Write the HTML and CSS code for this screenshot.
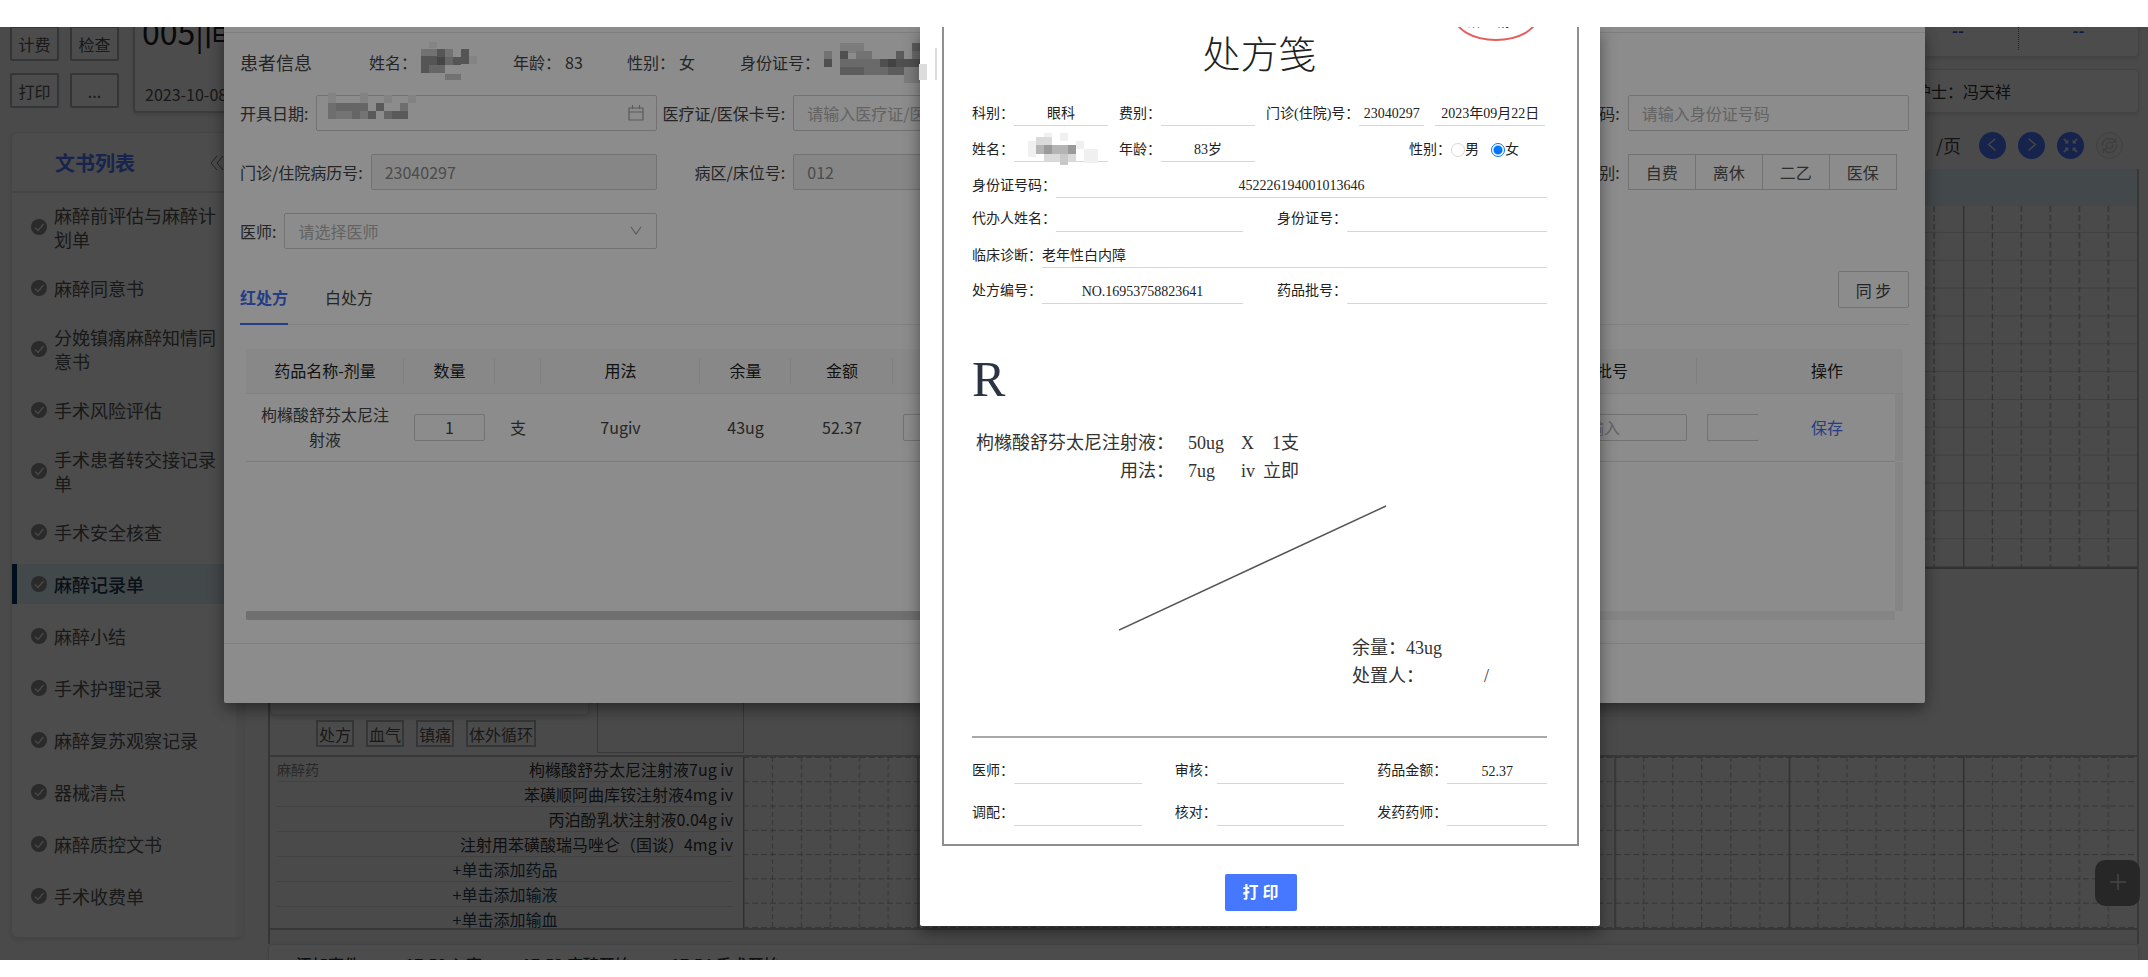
FILE: index.html
```html
<!DOCTYPE html>
<html lang="zh-CN">
<head>
<meta charset="utf-8">
<title>麻醉记录单</title>
<link rel="stylesheet" href="styles.css">
</head>
<body>
<svg class="defs" aria-hidden="true">
  <symbol id="ok" viewBox="0 0 16 16"><circle cx="8" cy="8" r="8" fill="#8c8c8c"/><path d="M4 8.500l3 3 5.500-6.500" fill="none" stroke="#f4f4f4" stroke-width="1.300"/></symbol>
</svg>
<div class="screen">
  <header class="topbar">
    <div class="quick">
      <button>计费</button><button>检查</button><button>打印</button><button>...</button>
    </div>
    <section class="card room"><h1>005|间</h1><p>2023-10-08</p></section>
    <div class="side-cards">
      <section class="card stats"><span class="stat">--</span><span class="stat">--</span></section>
      <section class="card nurse"><span>护士：</span><span>冯天祥</span></section>
    </div>
  </header>
  <div class="content">
    <nav class="sidebar">
      <div class="side-title"><h2>文书列表</h2><svg width="14" height="16" viewBox="0 0 14 16"><path d="M7 1L1 8l6 7M13 1L7 8l6 7" fill="none" stroke="#777"/></svg></div>
      <ul class="docs">
        <li><svg><use href="#ok"/></svg><a>麻醉前评估与麻醉计划单</a></li>
        <li><svg><use href="#ok"/></svg><a>麻醉同意书</a></li>
        <li><svg><use href="#ok"/></svg><a>分娩镇痛麻醉知情同意书</a></li>
        <li><svg><use href="#ok"/></svg><a>手术风险评估</a></li>
        <li><svg><use href="#ok"/></svg><a>手术患者转交接记录单</a></li>
        <li><svg><use href="#ok"/></svg><a>手术安全核查</a></li>
        <li class="active"><svg><use href="#ok"/></svg><a>麻醉记录单</a></li>
        <li><svg><use href="#ok"/></svg><a>麻醉小结</a></li>
        <li><svg><use href="#ok"/></svg><a>手术护理记录</a></li>
        <li><svg><use href="#ok"/></svg><a>麻醉复苏观察记录</a></li>
        <li><svg><use href="#ok"/></svg><a>器械清点</a></li>
        <li><svg><use href="#ok"/></svg><a>麻醉质控文书</a></li>
        <li><svg><use href="#ok"/></svg><a>手术收费单</a></li>
      </ul>
    </nav>
    <main class="main">
      <div class="pager">
        <span>/页</span>
        <button aria-label="上一页"><svg viewBox="0 0 28 28"><path d="M17 7l-7 6 7 6"/></svg></button>
        <button aria-label="下一页"><svg viewBox="0 0 28 28"><path d="M11 7l7 6-7 6"/></svg></button>
        <button aria-label="退出全屏"><svg viewBox="0 0 28 28"><path d="M7 7l4 4M21 7l-4 4M7 21l4-4M21 21l-4-4M11 8.500V11H8.500M17 8.500V11h2.500M11 19.500V17H8.500M17 19.500V17h2.500"/></svg></button>
        <button class="off" aria-label="刷新"><svg viewBox="0 0 28 28"><path d="M6 15a8 8 0 0 1 14-6M22 13a8 8 0 0 1-14 6M21 6v4h-4M7 22v-4h4"/><circle cx="14" cy="14" r="3.500"/></svg></button>
      </div>
      <div class="chart">
        <div class="chart-head"></div>
        <div class="vitals">
          <svg viewBox="0 0 1395 363" preserveAspectRatio="none">
            <defs>
              <pattern id="rows" width="1395" height="28" y="-2" patternUnits="userSpaceOnUse"><path d="M0 .5H1395" stroke="#d4d4d4"/></pattern>
              <pattern id="cols" width="174.400" height="363" patternUnits="userSpaceOnUse"><path d="M.5 0V363" stroke="#a8a8a8" stroke-width="2"/><path d="M29.500 0V363M58.500 0V363M87.500 0V363M116.500 0V363M145.500 0V363" stroke="#8c8c8c" stroke-dasharray="6 3"/></pattern>
            </defs>
            <rect width="1395" height="363" fill="url(#rows)"/><rect width="1395" height="363" fill="url(#cols)"/>
          </svg>
        </div>
        <div class="middle">
          <div class="tools">
            <div class="card tool-card"></div>
            <div class="tool-row"><button>处方</button><button>血气</button><button>镇痛</button><button>体外循环</button></div>
          </div>
          <div class="box"></div>
        </div>
        <div class="drugs">
          <div class="drug-list">
            <div class="drug"><small>麻醉药</small><span>枸橼酸舒芬太尼注射液7ug iv</span></div>
            <div class="drug"><span>苯磺顺阿曲库铵注射液4mg iv</span></div>
            <div class="drug"><span>丙泊酚乳状注射液0.04g iv</span></div>
            <div class="drug"><span>注射用苯磺酸瑞马唑仑（国谈）4mg iv</span></div>
            <div class="drug add"><a>+单击添加药品</a></div>
            <div class="drug add"><a>+单击添加输液</a></div>
            <div class="drug add"><a>+单击添加输血</a></div>
          </div>
          <div class="drug-grid">
            <svg viewBox="0 0 1395 174" preserveAspectRatio="none">
              <defs>
                <pattern id="r2" width="1395" height="24.700" patternUnits="userSpaceOnUse"><path d="M0 .5H1395" stroke="#b0b0b0" stroke-dasharray="6 3"/></pattern>
                <pattern id="c2" width="174.400" height="174" patternUnits="userSpaceOnUse"><path d="M.5 0V174" stroke="#a0a0a0" stroke-width="2"/><path d="M29.500 0V174M58.500 0V174M87.500 0V174M116.500 0V174M145.500 0V174" stroke="#aaa" stroke-dasharray="5 3"/></pattern>
              </defs>
              <rect width="1395" height="174" fill="url(#r2)"/><rect width="1395" height="174" fill="url(#c2)"/>
            </svg>
          </div>
        </div>
        <div class="strip"></div>
      </div>
      <div class="card events"><a>+添加事件</a><span>17:50 入室</span><span>17:53 麻醉开始</span><span>17:54 手术开始</span></div>
    </main>
  </div>
  <button class="fab" aria-label="添加"><svg width="16" height="16" viewBox="0 0 16 16"><path d="M8 0v16M0 8h16" stroke="#e8e8e8" stroke-width="1.500"/></svg></button>

  <div class="mask"></div>
  <section class="dialog rx-dialog">
    <div class="rx-head"></div>
    <div class="rx-body">
      <div class="patient">
        <h3>患者信息</h3>
        <p>姓名：
          <svg class="blot" width="56" height="40" shape-rendering="crispEdges"><path fill="#f0f0f0" d="M8 0h8v6H8zM48 14h8v8h-8z"/><path fill="#cfcfcf" d="M0 7h16v8H0zM24 7h8v8h-8zM24 32h16v6H24z"/><path fill="#9c9c9c" d="M0 14h16v9H0zM16 7h8v8h-8zM40 7h8v15h-8zM32 15h8v8h-8zM0 23h8v8H0z"/><path fill="#808080" d="M16 15h8v8h-8z"/><path fill="#bababa" d="M8 23h16v8H8zM24 15h8v8h-8z"/></svg>
        </p>
        <p class="age">年龄：<span>83</span></p>
        <p class="sex">性别：<span>女</span></p>
        <p class="idno">身份证号：
          <svg class="blot" width="96" height="44" shape-rendering="crispEdges"><path fill="#e2e2e2" d="M16 3h24v10H16zM80 27h16v16H80z"/><path fill="#d2d2d2" d="M0 11h8v8H0zM32 11h16v8H32z"/><path fill="#929292" d="M0 19h8v8H0zM16 11h8v8h-8zM56 19h40v8H56z"/><path fill="#a8a8a8" d="M16 27h24v8H16zM64 27h16v8H64zM72 11h8v8h-8zM88 3h8v8h-8z"/><path fill="#c2c2c2" d="M16 19h40v8H16zM40 27h24v8H40zM88 11h8v8h-8z"/><path fill="#7a7a7a" d="M64 19h8v8h-8z"/></svg>
        </p>
      </div>
      <form class="fields">
        <div class="field c1"><label for="f1">开具日期:</label><span class="ctl"><input id="f1">
          <svg class="blot" width="94" height="34" shape-rendering="crispEdges"><path fill="#eee" d="M0 0h8v10H0zM32 0h8v10h-8zM56 2h8v8h-8zM80 2h8v8h-8z"/><path fill="#c8c8c8" d="M0 10h8v16H0zM48 10h8v8h-8zM72 10h8v8h-8z"/><path fill="#bbb" d="M8 10h32v8H8zM24 18h8v8h-8zM56 18h8v8h-8z"/><path fill="#d4d4d4" d="M8 18h16v8H8zM32 18h8v8h-8z"/><path fill="#a4a4a4" d="M40 18h8v8h-8zM48 10h8v8h-8zM64 18h16v8H64z"/></svg>
          <svg class="suffix" viewBox="0 0 16 16"><path d="M1 3h14v12H1zM1 7h14M4.500 0v4M11.500 0v4"/></svg></span></div>
        <div class="field"><label for="f2">医疗证/医保卡号:</label><input id="f2" placeholder="请输入医疗证/医保卡号"></div>
        <div class="field last"><label for="f3">身份证号码:</label><input id="f3" placeholder="请输入身份证号码"></div>
        <div class="field c1"><label for="f4">门诊/住院病历号:</label><input id="f4" value="23040297" disabled></div>
        <div class="field"><label for="f5">病区/床位号:</label><input id="f5" value="012" disabled></div>
        <div class="field last"><label>费别:</label><div class="seg"><button type="button">自费</button><button type="button">离休</button><button type="button">二乙</button><button type="button">医保</button></div></div>
        <div class="field c1"><label for="f6">医师:</label><span class="ctl"><select id="f6"><option>请选择医师</option></select>
          <svg class="suffix" viewBox="0 0 16 16"><path d="M3 4l5 7 5-7"/></svg></span></div>
      </form>
      <div class="tabs">
        <button class="tab on">红处方</button><button class="tab">白处方</button>
        <button class="sync">同 步</button>
      </div>
      <div class="grid-wrap">
        <table class="grid">
          <colgroup><col class="w158"><col class="w91"><col class="w46"><col class="w159"><col class="w91"><col class="w102"><col><col class="w170"><col class="w62"><col class="w136"><col class="w8"></colgroup>
          <thead><tr><th>药品名称-剂量</th><th>数量</th><th></th><th>用法</th><th>余量</th><th>金额</th><th></th><th>批号</th><th class="nb"></th><th class="nb">操作</th><th class="nb"></th></tr></thead>
          <tbody><tr><td>枸橼酸舒芬太尼注射液</td><td><input value="1" aria-label="数量"></td><td>支</td><td>7ugiv</td><td>43ug</td><td>52.37</td><td><input aria-label="药品"></td><td class="batch"><input placeholder="请输入" aria-label="批号"></td><td class="cut"><input aria-label="备注"></td><td><a class="link">保存</a></td><td class="vbar"></td></tr></tbody>
        </table>
        <div class="void"><div class="vbar"></div></div>
        <div class="hbar"><div class="thumb"></div></div>
      </div>
    </div>
    <div class="rx-foot"></div>
  </section>

  <div class="mask"></div>
  <section class="dialog slip-dialog">
    <svg class="spill" width="20" height="44" shape-rendering="crispEdges"><path fill="#dcdcdc" d="M0 27h8v16H0zM16 11h2v32h-2z"/></svg>
    <div class="slip">
      <div class="stamp">麻、精一</div>
      <h2>处方笺</h2>
      <div class="line r1"><span class="k">科别：</span><span class="v w94">眼科</span><span class="k g11">费别：</span><span class="v w94"></span><span class="k g11">门诊(住院)号：</span><span class="v w65">23040297</span><span class="v w110 g11">2023年09月22日</span></div>
      <div class="line r1"><span class="k">姓名：</span><span class="v w94"><svg width="70" height="32" shape-rendering="crispEdges"><path fill="#f0f0f0" d="M16 0h8v8h-8zM0 8h8v16H0zM32 0h8v8h-8zM56 16h14v14H56zM48 8h8v8h-8z"/><path fill="#b4b4b4" d="M8 12h38v9H8z"/><path fill="#dadada" d="M8 4h16v8H8zM16 21h32v7H16z"/><path fill="#9a9a9a" d="M16 12h8v9h-8zM40 12h8v9h-8z"/><path fill="#c8c8c8" d="M32 21h8v11h-8z"/></svg></span><span class="k g11">年龄：</span><span class="v w94">83岁</span>
        <span class="sexes"><span class="k">性别：</span><label><input type="radio" name="sex">男</label><label><input type="radio" name="sex" checked>女</label></span></div>
      <div class="line r1"><span class="k">身份证号码：</span><span class="v">452226194001013646</span></div>
      <div class="line r2"><div class="half"><span class="k">代办人姓名：</span><span class="v"></span></div><div class="half"><span class="k">身份证号：</span><span class="v"></span></div></div>
      <div class="line r1"><span class="k">临床诊断：</span><span class="v left">老年性白内障</span></div>
      <div class="line r1"><div class="half"><span class="k">处方编号：</span><span class="v">NO.16953758823641</span></div><div class="half"><span class="k">药品批号：</span><span class="v"></span></div></div>
      <div class="rx-mark">R</div>
      <div class="med"><span class="name">枸橼酸舒芬太尼注射液：</span><span class="dose">50ug</span><span class="x">X</span><span class="n">1支</span></div>
      <div class="med"><span class="name">用法：</span><span class="dose">7ug</span><span class="x">iv</span><span>立即</span></div>
      <svg class="slash" viewBox="0 0 268 126"><path d="M0 125L267 1" stroke="#555" stroke-width="1.500"/></svg>
      <div class="rest"><p>余量：43ug</p><p>处置人：<span>/</span></p></div>
      <hr>
      <div class="signs">
        <div><span class="k">医师：</span><span class="v"></span></div><div><span class="k">审核：</span><span class="v"></span></div><div><span class="k">药品金额：</span><span class="v">52.37</span></div>
        <div><span class="k">调配：</span><span class="v"></span></div><div><span class="k">核对：</span><span class="v"></span></div><div><span class="k">发药药师：</span><span class="v"></span></div>
      </div>
    </div>
    <button class="print">打 印</button>
  </section>
</div>
</body>
</html>
```

FILE: styles.css
```css
* { box-sizing: border-box; }
body { margin: 0; padding: 27px 0 17px; background: #fff; font: 16px/24px "Noto Sans CJK SC", sans-serif; color: #444; }
h1, h2, h3, p, ul { margin: 0; padding: 0; font-weight: 400; }
button, input, select { font: inherit; color: inherit; }
.defs { position: absolute; width: 0; height: 0; }
.screen { position: relative; overflow: hidden; height: calc(100vh - 44px); background: #f8f8f8; }
.card { background: #fdfdfd; border: 1px solid #dcdfe2; border-radius: 4px; box-shadow: 0 2px 5px rgba(0, 0, 0, .12); }

.topbar { display: flex; height: 126px; margin-top: -40px; padding: 0 9px 0 10px; }
.quick { display: grid; grid-template-columns: 49px 49px; grid-auto-rows: 35px; gap: 12px 11px; align-content: end; padding-bottom: 5px; margin-right: 14px; }
.quick button { padding: 0; border: 2px solid #aeb2b4; border-radius: 2px; background: #fbfbfb; color: #555; }
.room { flex: 1; display: flex; flex-direction: column; justify-content: flex-end; padding: 0 11px 5px 7px; border-width: 2px; border-color: #c4c7c9; }
.room h1 { font-size: 32px; line-height: 40px; color: #222; }
.room p { margin-top: 31px; padding-left: 3px; color: #555; }
.side-cards { width: 720px; display: flex; flex-direction: column; gap: 12px; margin-left: 12px; }
.stats { height: 70px; display: flex; justify-content: flex-end; padding-bottom: 6px; }
.stat { width: 120px; padding-top: 30px; text-align: center; color: #2f5ae0; font-weight: 700; }
.stat + .stat { border-left: 1px dotted #777; }
.nurse { height: 44px; padding: 9px 127px 0 0; display: flex; justify-content: flex-end; color: #333; }

.content { display: flex; margin-top: 19px; padding: 0 9px 0 11px; align-items: flex-start; }
.sidebar { width: 232px; height: 806px; flex: none; background: #fdfdfd; border: 1px solid #e4e6e8; border-radius: 6px; border-right: 7px solid #f2f2f2; box-shadow: 0 2px 5px rgba(0, 0, 0, .12); }
.side-title { height: 60px; display: flex; align-items: center; justify-content: space-between; padding: 2px 12px 0 43px; border-bottom: 2px solid #e6e8ea; }
.side-title h2 { font-size: 20px; font-weight: 700; color: #4d7aff; }
.docs { list-style: none; padding-top: 5px; display: flex; flex-direction: column; gap: 12px; }
.docs li { display: flex; align-items: center; min-height: 40px; padding: 5px 4px 5px 19px; font-size: 18px; line-height: 24px; color: #555; }
.docs svg { width: 16px; height: 16px; flex: none; margin-right: 7px; }
.docs .active { background: #dfeefa; border-left: 5px solid #00365c; padding-left: 14px; color: #1c3a50; font-weight: 500; }

.main { flex: 1; min-width: 0; margin-left: 25px; }
.pager { display: flex; justify-content: flex-end; align-items: flex-start; gap: 12px; height: 37px; padding-right: 16px; }
.pager span { font-size: 18px; margin-right: 6px; line-height: 27px; }
.pager button { width: 27px; height: 27px; padding: 0; border: 0; border-radius: 50%; background: #4a76ff; }
.pager svg { display: block; width: 27px; height: 27px; fill: none; stroke: #e4e4e4; stroke-width: 1.6; }
.pager .off { background: #f3f3f3; border: 1px solid #d5d5d5; }
.pager .off svg { width: 25px; height: 25px; stroke: #d0d0d0; }
.chart { border-right: 2px solid #bbb; border-left: 2px solid #b4b4b4; }
.chart-head { height: 37px; background: #dfeef8; }
.vitals { height: 363px; padding-left: 473px; border-bottom: 2px solid #aaa; }
.vitals svg, .drug-grid svg { display: block; width: 100%; height: 100%; }
.middle { height: 186px; display: flex; align-items: flex-end; }
.tools { width: 319px; }
.tool-card { height: 60px; margin-bottom: 5px; }
.tool-row { display: flex; gap: 12px; padding-left: 46px; margin-bottom: 8px; white-space: nowrap; }
.tool-row button { height: 27px; flex: none; padding: 0 1px; border: 2px solid #b0b4b6; background: #fafafa; color: #555; line-height: 22px; }
.box { width: 147px; height: 120px; margin: 0 0 2px 8px; border: 1px solid #bcbcbc; }
.drugs { display: flex; height: 175px; border-top: 2px solid #bababa; border-bottom: 2px solid #bababa; }
.drug-list { width: 473px; flex: none; padding: 0 10px 0 7px; display: grid; grid-template-rows: repeat(7, 1fr); }
.drug { display: flex; align-items: center; border-bottom: 1px solid #dadada; color: #333; }
.drug:last-child { border-bottom: 0; }
.drug small { font-size: 14px; color: #888; }
.drug span { margin-left: auto; }
.drug.add { justify-content: center; color: #24435c; }
.drug-grid { flex: 1; min-width: 0; }
.strip { height: 14px; background: #f2f2f2; }
.events { height: 40px; display: flex; align-items: center; padding-left: 18px; font-weight: 500; color: #333; }
.events a { margin-right: 45px; }
.events span { margin-right: 40px; }
.fab { position: absolute; right: 8px; bottom: 54px; width: 45px; height: 46px; padding: 0; border: 0; border-radius: 10px; background: #838383; }

.mask { position: absolute; inset: 0; background: rgba(0, 0, 0, .45); }
.dialog { position: absolute; background: #fff; box-shadow: 0 6px 16px rgba(0, 0, 0, .45); }
.rx-dialog { left: 224px; right: 223px; top: 0; border-radius: 0 0 2px 2px; }
.rx-head { height: 6px; border-bottom: 1px solid #e6e6e6; }
.rx-body { padding: 0 16px; }
.patient { display: flex; align-items: center; height: 62px; padding-bottom: 5px; }
.patient h3 { width: 129px; font-size: 18px; }
.patient p { display: flex; align-items: center; }
.patient p:nth-child(2) { width: 144px; }
.patient .age { width: 114px; }
.patient .sex { width: 113px; }
.patient span { margin-left: 4px; }
.blot { flex: none; }
.patient .blot { margin-left: 4px; }
.fields { display: grid; grid-template-columns: repeat(4, 1fr); gap: 23px 0; }
.field { display: flex; align-items: center; height: 36px; }
.field.last { grid-column: 4; }
.field label { width: 128px; flex: none; margin-right: 8px; text-align: right; white-space: nowrap; }
.field.c1 { grid-column: 1; }
.field.c1 label { width: auto; }
.field input, .field select { flex: 1; min-width: 0; width: 100%; height: 36px; padding: 0 13px; border: 1px solid #cfcfcf; border-radius: 2px; background: #fff; appearance: none; }
.field select, input::placeholder { color: #b5b5b5; }
.field input:disabled { background: #f5f5f5; color: #8a8a8a; }
.ctl { position: relative; flex: 1; display: flex; }
.ctl .blot { position: absolute; left: 12px; top: -2px; }
.suffix { position: absolute; right: 13px; top: 10px; width: 16px; height: 16px; fill: none; stroke: #a6a6a6; stroke-width: 1.2; }
.seg { display: flex; }
.seg button { width: 68px; height: 36px; padding: 0; margin-right: -1px; border: 1px solid #cfcfcf; background: #fff; color: #555; }
.tabs { display: flex; height: 54px; margin-top: 22px; border-bottom: 1px solid #eaeaea; }
.tab { padding: 0; margin-right: 37px; border: 0; border-bottom: 2px solid transparent; background: none; height: 54px; }
.tab.on { color: #4570f5; font-weight: 700; border-color: #4570f5; }
.sync { width: 71px; height: 37px; margin-left: auto; padding: 0; border: 1px solid #cfcfcf; border-radius: 2px; background: #fff; }
.grid-wrap { margin: 24px 6px 0; }
.grid { width: 100%; table-layout: fixed; border-collapse: collapse; text-align: center; line-height: 25px; }
.w158 { width: 158px; } .w91 { width: 91px; } .w46 { width: 46px; } .w159 { width: 159px; } .w102 { width: 102px; }
.w170 { width: 170px; } .w62 { width: 62px; } .w136 { width: 136px; } .w8 { width: 8px; }
.grid th { height: 44px; padding: 0; background: linear-gradient(#e8e8e8, #e8e8e8) right center / 1px 26px no-repeat #f7f7f7; border-bottom: 1px solid #ececec; font-weight: 400; color: #222; }
.grid th.nb { background: #f7f7f7; }
.grid td { height: 68px; padding: 0 10px; border-bottom: 1px solid #e2e2e2; }
.grid td:first-child { padding: 0 14px; }
.grid td:nth-child(3) { padding: 0; }
.grid input { display: block; width: 100%; height: 27px; padding: 0 10px; border: 1px solid #cfcfcf; border-radius: 2px; background: #fff; }
.grid td:nth-child(2) input { text-align: center; }
.grid td.batch { padding-left: 34px; }
.grid td.cut { padding-right: 0; }
.grid td.cut input { border-right: 0; }
.grid .link { color: #4570f5; }
.grid td.vbar { padding: 0; border: 0; background: #f2f2f2; }
.void { height: 149px; display: flex; justify-content: flex-end; }
.void .vbar { width: 8px; background: #f2f2f2; }
.hbar { height: 9px; margin-right: 8px; background: #f2f2f2; }
.thumb { width: 70%; height: 9px; border-radius: 2px; background: #c8cac9; }
.rx-foot { height: 60px; margin-top: 23px; border-top: 1px solid #e8e8e8; }

.slip-dialog { left: 920px; width: 680px; top: 0; padding: 0 21px 15px 22px; border-radius: 0 0 2px 2px; font: 14px/20px "Liberation Serif", "Noto Sans CJK SC", serif; color: #222; }
.spill { position: absolute; left: -1px; top: 10px; }
.slip { position: relative; overflow: hidden; padding: 0 30px 18px 28px; border: 2px solid #8f8f8f; border-top: 0; }
.stamp { position: absolute; right: 38px; top: -38px; width: 86px; height: 52px; border: 2px solid #e0605c; border-radius: 50%; text-align: center; line-height: 62px; }
.slip h2 { padding-top: 6px; font-size: 38px; line-height: 44px; text-align: center; font-weight: 300; }
.line { display: flex; height: 36px; align-items: flex-end; }
.slip h2 + .line { margin-top: 13px; }
.line.r2 { height: 34px; }
.k { flex: none; line-height: 22px; padding-bottom: 1px; white-space: nowrap; }
.v { flex: 1; height: 24px; line-height: 24px; border-bottom: 1px solid #d6d6d6; text-align: center; white-space: nowrap; }
.v svg { display: block; margin: -5px 0 0 14px; }
.w94, .w65, .w110 { flex: none; }
.w94 { width: 94px; } .w65 { width: 65px; } .w110 { width: 110px; margin-left: auto; }
.g11 { margin-left: 11px; }
.v.left { text-align: left; }
.half { flex: 1; display: flex; }
.half:first-child { flex: none; width: 271px; margin-right: 34px; }
.sexes { margin-left: auto; margin-right: 28px; display: flex; }
.sexes label { display: flex; align-items: center; height: 22px; margin-right: 12px; }
.sexes label:last-child { margin-right: 0; }
.sexes input { appearance: none; margin: 0; width: 14px; height: 14px; border: 1px solid #d8d8d8; border-radius: 50%; }
.sexes input:checked { border-color: #0075ff; background: radial-gradient(circle, #0075ff 4px, #fff 5px); }
.rx-mark { margin-top: 43px; font-size: 50px; line-height: 64px; color: #2c3444; }
.med { display: flex; padding-left: 4px; font-size: 18px; line-height: 28px; color: #333; }
.rx-mark + .med { margin-top: 18px; }
.name { width: 198px; text-align: right; }
.dose { width: 67px; padding-left: 14px; }
.med .x { width: 22px; }
.med .n { padding-left: 9px; }
.slash { display: block; width: 268px; height: 126px; margin: 20px 0 0 147px; }
.rest { margin: 3px 0 0 380px; font-size: 18px; line-height: 28px; color: #333; }
.rest span { margin-left: 60px; }
.slip hr { height: 2px; margin: 46px 0 22px; border: 0; background: #a8a8a8; }
.signs { display: grid; grid-template-columns: repeat(3, 1fr); gap: 18px 33px; }
.signs div { display: flex; }
.print { display: block; width: 72px; height: 37px; margin: 28px auto 0; padding: 0; border: 0; border-radius: 2px; background: #4577ff; color: #fff; font-size: 16px; font-weight: 700; }
```
